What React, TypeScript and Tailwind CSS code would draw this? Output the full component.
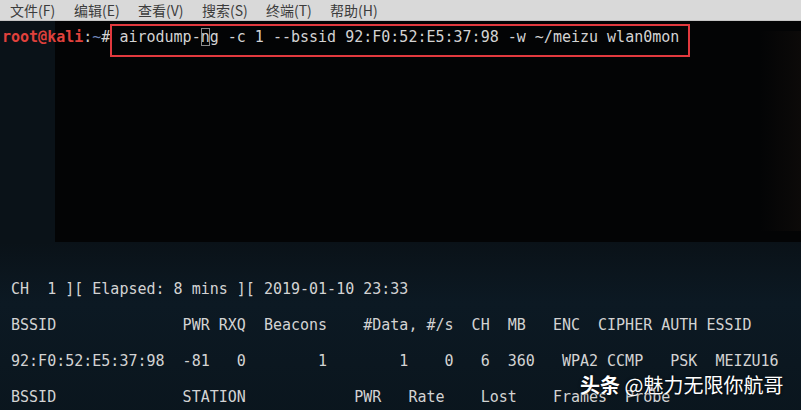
import React from "react";

const menus = ["文件(F)", "编辑(E)", "查看(V)", "搜索(S)", "终端(T)", "帮助(H)"];

// airodump output, one entry per terminal row (rows 1-13 are empty)
const output: string[] = [
  ...Array(13).fill(""),
  " CH  1 ][ Elapsed: 8 mins ][ 2019-01-10 23:33",
  "",
  " BSSID              PWR RXQ  Beacons    #Data, #/s  CH  MB   ENC  CIPHER AUTH ESSID",
  "",
  " 92:F0:52:E5:37:98  -81   0        1        1    0   6  360   WPA2 CCMP   PSK  MEIZU16",
  "",
  " BSSID              STATION            PWR   Rate    Lost    Frames  Probe",
  "",
];

const mono = "font-['DejaVu_Sans_Mono',monospace]";

export default function App() {
  return (
    <div className="w-[801px] h-[410px] overflow-hidden flex flex-col bg-[#0b141b]">
      {/* Menu bar */}
      <div className="h-[21px] shrink-0 flex items-center pl-[10px] bg-[#d9d9d9] border-b border-[#c4c4c4] font-['Noto_Sans_CJK_SC',sans-serif] text-[14px] text-[#3c3c3c]">
        {menus.map((m) => (
          <span key={m} className="w-[64px] leading-none">{m}</span>
        ))}
      </div>

      {/* Terminal body */}
      <div className="relative flex-1 bg-[linear-gradient(180deg,#0a1218_0%,#0a1218_55%,#0c1923_70%,#0a151d_100%)]">
        {/* wallpaper shade behind the text */}
        <div className="absolute left-[55px] top-0 w-[746px] h-[221px] bg-[#030405]" />
        <div className="absolute left-[760px] top-[10px] w-[41px] h-[200px] bg-[linear-gradient(90deg,transparent,#0c0a09)]" />

        <div className={`relative pt-[7px] pl-[2px] ${mono} text-[15px] leading-[18px] text-[#d3d3d3]`}>
          <div className="h-[18px] whitespace-pre">
            <span className="font-bold text-[#e0413c]">root@kali</span>
            <span className="text-[#c8c8c8]">:</span>
            <span className="text-[#6f86b8]">~</span>
            <span>{"# airodump-"}</span>
            <span className="outline outline-1 outline-[#8a8a8a] -outline-offset-1">n</span>
            <span>{"g -c 1 --bssid 92:F0:52:E5:37:98 -w ~/meizu wlan0mon"}</span>
          </div>
          {output.map((line, i) => (
            <div key={i} className="h-[18px] whitespace-pre">
              {line}
            </div>
          ))}
        </div>

        {/* highlight box around the command */}
        <div className="absolute left-[110px] top-[3px] w-[580px] h-[33px] border-2 border-[#e2393e]" />

        {/* watermark */}
        <div className="absolute left-[580px] top-[350px] font-['Noto_Sans_CJK_SC',sans-serif] text-[20px] leading-[28px] text-white [text-shadow:0_0_3px_rgba(0,0,0,0.8)] whitespace-nowrap">
          <span className="font-bold">头条</span> @魅力无限你航哥
        </div>
      </div>
    </div>
  );
}
